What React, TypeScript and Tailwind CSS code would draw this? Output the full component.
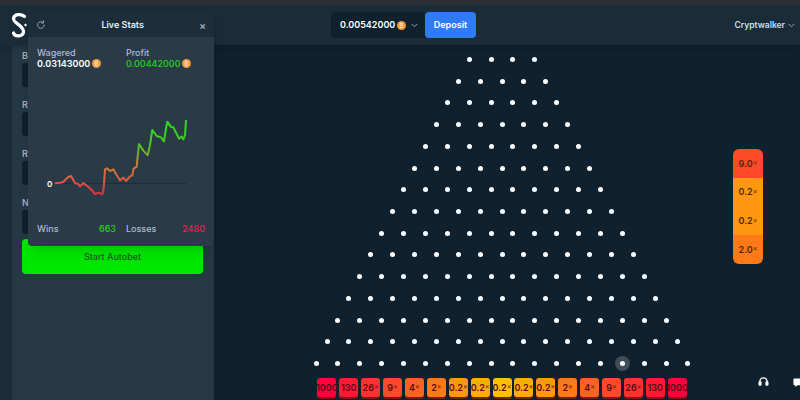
import React from "react";

const font = { fontFamily: "Inter, 'Liberation Sans', sans-serif" };

function Coin({ size = 9 }: { size?: number }) {
  return (
    <svg width={size} height={size} viewBox="0 0 10 10" className="shrink-0">
      <circle cx="5" cy="5" r="5" fill="#f09a3e" />
      <text x="5" y="7.4" textAnchor="middle" fontSize="6.5" fontWeight="700" fill="#fbe3c4" fontFamily="Inter">₿</text>
    </svg>
  );
}

function Chevron({ className = "" }: { className?: string }) {
  return (
    <svg width="7" height="5" viewBox="0 0 8 6" fill="none" className={className}>
      <path d="M1 1.5 L4 4.5 L7 1.5" stroke="#93a5b1" strokeWidth="1.2" strokeLinecap="round" strokeLinejoin="round" />
    </svg>
  );
}

const rowCounts = Array.from({ length: 15 }, (_, i) => i + 4);

const slots: [string, string, boolean][] = [
  ["1000", "#ff003f", false],
  ["130", "#fe1a35", false],
  ["26", "#fe3230", true],
  ["9", "#fe4a2a", true],
  ["4", "#fe6221", true],
  ["2", "#fe7a18", true],
  ["0.2", "#ff9810", true],
  ["0.2", "#ffac0a", true],
  ["0.2", "#ffc000", true],
  ["0.2", "#ffac0a", true],
  ["0.2", "#ff9810", true],
  ["2", "#fe7a18", true],
  ["4", "#fe6221", true],
  ["9", "#fe4a2a", true],
  ["26", "#fe3230", true],
  ["130", "#fe1a35", false],
  ["1000", "#ff003f", false],
];

const history: [string, string][] = [
  ["9.0", "#fe4a2a"],
  ["0.2", "#ff9810"],
  ["0.2", "#ff9810"],
  ["2.0", "#fe7a18"],
];

const fields = ["B", "R", "R", "N"];

const pts =
  "92,250 105,248 115,246 122,238 130,231 138,228 144,238 150,250 160,252 165,259 175,249 190,261 200,270 210,282 222,278 232,283 236,265 240,208 246,205 255,213 265,208 275,225 285,241 295,233 303,243 315,229 322,226 326,206 335,200 342,132 355,152 368,166 375,135 382,90 395,108 408,112 417,124 423,85 427,65 437,80 445,82 455,102 462,116 470,110 475,118 480,105 483,62";

export default function App() {
  return (
    <div style={font} className="relative w-[800px] h-[400px] overflow-hidden bg-[#0f212e] flex flex-col">
      <div className="h-[5px] shrink-0 bg-[#2b2f33]" />
      <header className="h-[40px] shrink-0 bg-[#1a2c38] shadow-md flex items-center relative pr-[5px]">
        <div className="flex-1 flex items-center justify-end h-full">
          <div className="flex items-center h-[26px] w-[94px] bg-[#0f212e] rounded-l pl-[9px] text-[9px] font-semibold text-white gap-[2px]">
            <span>0.00542000</span>
            <Coin size={9} />
            <Chevron className="ml-[3px]" />
          </div>
          <button className="h-[26px] w-[51px] bg-[#2f7bf5] rounded text-[9px] font-semibold text-white">Deposit</button>
        </div>
        <div className="w-[319px] flex items-center justify-end gap-[3px] text-[8.5px] font-semibold text-[#d5dfe6]">
          <span>Cryptwalker</span>
          <Chevron />
        </div>
      </header>

      <div className="flex-1 flex min-h-0 bg-[#0f212e]">
        <div className="w-[12px] shrink-0 bg-[#1a2c38]" />
        <aside className="w-[202px] bg-[#253843] shrink-0 flex flex-col px-[10px]">
          {fields.map((f, i) => (
            <div key={i} className="h-[49px] flex flex-col justify-end pb-[7px] gap-[2px]">
              <span className="text-[9px] font-medium leading-[11px] text-[#b1bad3] whitespace-nowrap">{f}</span>
              <div className="h-[24px] rounded-[3px] bg-[#0f212e]" />
            </div>
          ))}
          <button className="mt-[-2px] h-[35px] w-[181px] rounded bg-[#00e701] text-[9px] font-medium text-[#145c1c]">Start Autobet</button>
        </aside>

        <main className="flex-1 flex flex-col items-center relative pt-[12px]">
          <div className="flex flex-col items-center gap-[16.72px] mr-[10px]">
            {rowCounts.map((n, r) => (
              <div key={r} className="flex items-center h-[5px] gap-[16.88px]">
                {Array.from({ length: n }, (_, i) => (
                  <span key={i} className="relative w-[5px] h-[5px] rounded-full bg-white">
                    {r === 14 && i === 14 && (
                      <span className="absolute -left-[5px] -top-[5px] w-[15px] h-[15px] rounded-full bg-white/20" />
                    )}
                  </span>
                ))}
              </div>
            ))}
          </div>
          <div className="flex gap-[2.9px] mt-[12px] mr-[10px]">
            {slots.map(([v, c, x], i) => (
              <div
                key={i}
                style={{ backgroundColor: c }}
                className="w-[19px] h-[19px] rounded-[3px] flex items-center justify-center text-[9px] font-semibold text-[#5a0a18] shadow-[0_2px_0_rgba(140,30,10,0.8)] whitespace-nowrap"
              >
                <span>{v}</span>
                {x && <span className="text-[7px] opacity-70">×</span>}
              </div>
            ))}
          </div>
          <div className="absolute right-[37px] top-[104px] w-[30px] rounded-[6px] overflow-hidden flex flex-col">
            {history.map(([v, c], i) => (
              <div key={i} style={{ backgroundColor: c }} className="h-[28.75px] flex items-center justify-center text-[9px] font-semibold text-[#4a2a0a]">
                <span>{v}</span>
                <span className="text-[7px] opacity-70">×</span>
              </div>
            ))}
          </div>
          <svg className="absolute left-[544px] top-[331px]" width="11" height="11" viewBox="0 0 24 24" fill="none" stroke="#fff" strokeWidth="3">
            <path d="M4 15v-3a8 8 0 0 1 16 0v3" />
            <rect x="2.5" y="13" width="4" height="7" rx="1.5" fill="#fff" />
            <rect x="17.5" y="13" width="4" height="7" rx="1.5" fill="#fff" />
          </svg>
          <svg className="absolute left-[579px] top-[332px]" width="11" height="11" viewBox="0 0 24 24" fill="#fff">
            <path d="M3 3h18a2 2 0 0 1 2 2v11a2 2 0 0 1-2 2H10l-5 4v-4H3a2 2 0 0 1-2-2V5a2 2 0 0 1 2-2z" />
          </svg>
        </main>
      </div>

      <div className="absolute left-[28px] top-[13px] w-[186px] h-[233px] rounded bg-[#2a3b47] shadow-lg flex flex-col">
        <div className="h-[24px] shrink-0 bg-[#1c2e3a] rounded-t flex items-center justify-between px-[8px] text-[9px] font-semibold text-[#e8eef2]">
          <svg width="10" height="10" viewBox="0 0 24 24" fill="none" stroke="#93a5b1" strokeWidth="2.4" strokeLinecap="round">
            <path d="M20 12a8 8 0 1 1-2.5-5.8" />
            <path d="M18 2v5h-5" />
          </svg>
          <span>Live Stats</span>
          <span className="text-[10px] text-[#a9b8c2] leading-none">×</span>
        </div>
        <div className="flex px-[9px] pt-[10px]">
          <div className="w-[89px]">
            <div className="text-[9px] font-medium text-[#b1bad3] leading-[11px]">Wagered</div>
            <div className="flex items-center gap-[2px] text-[9px] font-semibold text-white leading-[11px]">0.03143000 <Coin /></div>
          </div>
          <div>
            <div className="text-[9px] font-medium text-[#b1bad3] leading-[11px]">Profit</div>
            <div className="flex items-center gap-[2px] text-[9px] font-medium text-[#1fd60f] leading-[11px]">0.00442000 <Coin /></div>
          </div>
        </div>
        <div className="flex-1" />
        <div className="flex px-[9px] pb-[12px] text-[9px] font-medium leading-[11px]">
          <div className="w-[89px] flex justify-between pr-[10px]">
            <span className="text-[#b1bad3]">Wins</span>
            <span className="text-[#1fd60f]">663</span>
          </div>
          <div className="flex-1 flex justify-between">
            <span className="text-[#b1bad3]">Losses</span>
            <span className="text-[#e8264f]">2480</span>
          </div>
        </div>
        <span className="absolute left-[19px] top-[165px] text-[8px] leading-[12px] font-semibold text-white">0</span>
        <svg width="170" height="110" viewBox="0 0 510 330" className="absolute left-[-3px] top-[87px]">
          <defs>
            <linearGradient id="g" gradientUnits="userSpaceOnUse" x1="0" y1="60" x2="0" y2="285">
              <stop offset="0" stopColor="#22e01a" />
              <stop offset="0.35" stopColor="#4cc422" />
              <stop offset="0.6" stopColor="#c4803a" />
              <stop offset="0.8" stopColor="#dd5a45" />
              <stop offset="1" stopColor="#e8263f" />
            </linearGradient>
          </defs>
          <line x1="92" y1="250" x2="483" y2="250" stroke="#1a2c38" strokeWidth="3" />
          <polyline points={pts} fill="none" stroke="url(#g)" strokeWidth="6" strokeLinejoin="round" strokeLinecap="round" />
        </svg>
      </div>

      <svg className="absolute left-[10px] top-[12px]" width="20" height="27" viewBox="0 0 20 27" fill="none" stroke="#fff" strokeLinecap="round">
        <path d="M14.5 4.5 C11 1.5 4 2 3.5 6.5 C3 11 13.5 13.5 13.5 19.5 C13.5 24.5 5 25.5 3.5 21" strokeWidth="3.2" />
        <circle cx="15.5" cy="13" r="1.2" fill="#fff" stroke="none" />
      </svg>
    </div>
  );
}
